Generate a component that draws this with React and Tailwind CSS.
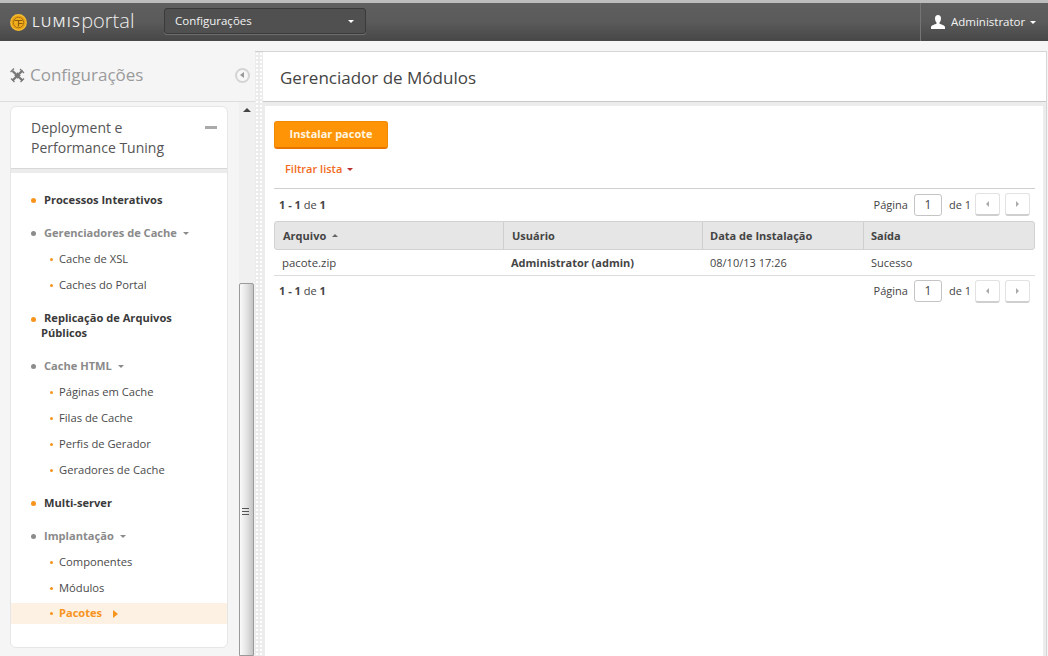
import React from 'react';

const Caret = ({ className = '' }) => (
  <span className={`inline-block w-0 h-0 border-x-[3px] border-x-transparent border-t-[3px] ${className}`}></span>
);

const SubItem = ({ label }) => (
  <div className="flex items-center h-[26px] pl-[39px] text-[11.2px] text-[#4a4a4a]">
    <span className="w-[3px] h-[3px] rounded-full bg-[#f7941d] mr-[6px]"></span>
    {label}
  </div>
);

const MainItem = ({ label }) => (
  <div className="flex items-center h-[26px] pl-[20px] text-[11.1px] font-bold text-[#3a3a3a]">
    <span className="w-[5px] h-[5px] rounded-full bg-[#f7941d] mr-[8px]"></span>
    {label}
  </div>
);

const GroupItem = ({ label }) => (
  <div className="flex items-center h-[26px] pl-[20px] text-[11.1px] font-bold text-[#8a8a8a]">
    <span className="w-[5px] h-[5px] rounded-full bg-[#8c8c8c] mr-[8px]"></span>
    {label}
    <Caret className="ml-[6px] border-t-[#8a8a8a]" />
  </div>
);

const Pager = () => (
  <div className="flex items-center text-[11px] text-[#444]">
    <span>Página</span>
    <span className="w-[28px] h-[22px] ml-[6px] mr-[7px] flex items-center justify-center border border-[#c4c4c4] rounded-[3px] bg-white text-[12px]">1</span>
    <span>de 1</span>
    <span className="w-[25px] h-[23px] ml-[4px] flex items-center justify-center border border-[#e2e2e2] border-b-2 border-b-[#cfcfcf] rounded-[3px] bg-white">
      <span className="w-0 h-0 border-y-[3px] border-y-transparent border-r-[3px] border-r-[#aaa]"></span>
    </span>
    <span className="w-[25px] h-[23px] ml-[5px] flex items-center justify-center border border-[#e2e2e2] border-b-2 border-b-[#cfcfcf] rounded-[3px] bg-white">
      <span className="w-0 h-0 border-y-[3px] border-y-transparent border-l-[3px] border-l-[#aaa]"></span>
    </span>
  </div>
);

const Summary = () => (
  <span className="text-[11px] text-[#444]"><b>1 - 1</b> de <b>1</b></span>
);

const App = () => {
  return (
    <div className="w-[1048px] h-[656px] overflow-hidden flex flex-col bg-[#f5f5f5] font-['Open_Sans',sans-serif]">
      {/* Top bar */}
      <div className="h-[41px] shrink-0 flex items-stretch border-t-[3px] border-t-[#bdbdbd] bg-gradient-to-b from-[#5f5f5f] via-[#5a5a5a] to-[#474747]">
        <div className="w-[164px] flex items-center pl-[10px]">
          <svg width="17" height="17" viewBox="0 0 17 17" className="shrink-0">
            <circle cx="8.5" cy="8.5" r="7.7" fill="#e8a015" stroke="#f4bb2f" strokeWidth="1.4" />
            <circle cx="8.5" cy="8.5" r="5.2" fill="#f0ad1e" stroke="#a8730f" strokeWidth="1" />
            <path d="M4.500 6.500h8M8.500 6.500v6M8.500 9.500h4" stroke="#8a5c0c" strokeWidth="1.2" fill="none" />
          </svg>
          <span className="ml-[5px] text-[14.500px] tracking-[1.200px] text-[#eee] leading-none">LUMIS</span>
          <span className="text-[20px] text-[#eee] leading-none font-light -mt-[3px]">portal</span>
        </div>
        <div className="self-start mt-[5px] w-[202px] h-[26px] flex items-center justify-between pl-[10px] pr-[11px] rounded-[3px] border border-[#3a3a3a] bg-[#505050] shadow-[0_1px_0_#6e6e6e] text-[11.500px] text-[#f2f2f2]">
          Configurações
          <Caret className="border-t-white" />
        </div>
        <div className="ml-auto w-[128px] flex items-center pl-[10px] border-l border-l-[#757575] text-[11.500px] text-[#f2f2f2]">
          <svg width="14" height="14" viewBox="0 0 14 14" className="mr-[6px] shrink-0">
            <path d="M7 0C5 0 4 1.500 4 3.500c0 1.500.5 3 1.500 4v1.200C4 9.500.5 10 0 12v2h14v-2c-.5-2-4-2.500-5.500-3.300V7.500C9.500 6.500 10 5 10 3.500 10 1.500 9 0 7 0Z" fill="#fff" />
          </svg>
          Administrator
          <Caret className="ml-[5px] border-t-white" />
        </div>
      </div>

      <div className="flex-1 flex min-h-0">
        {/* Sidebar */}
        <div className="w-[255px] shrink-0 flex flex-col">
          <div className="h-[61px] shrink-0 flex items-center justify-between pl-[10px] pr-[5px] border-b border-b-[#dedede]">
            <div className="flex items-center mt-[8px]">
              <svg width="15" height="15" viewBox="0 0 15 15" className="mr-[5px]">
                <path d="M2.500 3 12.500 12.500M12.500 2.500 2.500 12.500" stroke="#777" strokeWidth="2.400" fill="none" />
                <path d="M0.500 4 4 .5M10 1l4 4M1 10.500l3.500 3.500M10.500 14l3.500-3.500M7.500 4.500v6M4.500 7.500h6" stroke="#777" strokeWidth="1.200" fill="none" />
              </svg>
              <span className="text-[17px] text-[#9b9b9b]">Configurações</span>
            </div>
            <span className="mt-[8px] w-[15px] h-[15px] rounded-full border-2 border-[#d4d4d4] bg-[#f7f7f7] flex items-center justify-center">
              <span className="w-0 h-0 -ml-[1px] border-y-[3px] border-y-transparent border-r-[4px] border-r-[#999]"></span>
            </span>
          </div>
          <div className="flex-1 flex min-h-0">
            <div className="w-[239px] pl-[10px] pr-[11px] pt-[4px]">
              <div className="h-[542px] bg-white rounded-[6px] border border-[#e6e6e6] overflow-hidden">
                <div className="h-[62px] flex justify-between pl-[20px] pr-[10px] pt-[11px] border-b border-b-[#d8d8d8] text-[14px] leading-[20px] text-[#555]">
                  <div>Deployment e<br />Performance Tuning</div>
                  <span className="w-[12px] h-[3px] bg-[#aaa] mt-[8px]"></span>
                </div>
                <div className="h-[4px] bg-[#ececec]"></div>
                <div className="pt-[14px]">
                  <MainItem label="Processos Interativos" />
                  <div className="h-[7px]"></div>
                  <GroupItem label="Gerenciadores de Cache" />
                  <SubItem label="Cache de XSL" />
                  <SubItem label="Caches do Portal" />
                  <div className="h-[9px]"></div>
                  <div className="pl-[20px] pr-[10px] text-[11.100px] font-bold text-[#3a3a3a] leading-[15px] py-[3px]">
                    <span className="inline-block w-[5px] h-[5px] rounded-full bg-[#f7941d] mr-[8px] align-middle"></span>
                    Replicação de Arquivos<br /><span className="ml-[10px]">Públicos</span>
                  </div>
                  <div className="h-[10px]"></div>
                  <GroupItem label="Cache HTML" />
                  <SubItem label="Páginas em Cache" />
                  <SubItem label="Filas de Cache" />
                  <SubItem label="Perfis de Gerador" />
                  <SubItem label="Geradores de Cache" />
                  <div className="h-[7px]"></div>
                  <MainItem label="Multi-server" />
                  <div className="h-[7px]"></div>
                  <GroupItem label="Implantação" />
                  <SubItem label="Componentes" />
                  <SubItem label="Módulos" />
                  <div className="flex items-center h-[21px] mt-[2px] pl-[39px] bg-[#fdf1e3] text-[11.100px] font-bold text-[#f7941d]">
                    <span className="w-[3px] h-[3px] rounded-full bg-[#f7941d] mr-[6px]"></span>
                    Pacotes
                    <span className="ml-[11px] w-0 h-0 border-y-[4px] border-y-transparent border-l-[5px] border-l-[#f7941d]"></span>
                  </div>
                </div>
              </div>
            </div>
            {/* Scrollbar */}
            <div className="w-[16px] relative bg-[#f0f0f0]">
              <span className="absolute top-[6px] left-[4px] w-0 h-0 border-x-[4px] border-x-transparent border-b-[4px] border-b-[#444]"></span>
              <div className="absolute top-[181px] bottom-0 left-0 w-[15px] rounded-t-[2px] border border-[#9a9a9a] bg-gradient-to-r from-[#fafafa] via-[#e4e4e4] to-[#c4c4c4]"></div>
              <div className="absolute top-[406px] left-[3px] w-[7px] h-[7px] border-y border-[#555] flex items-center">
                <div className="w-full h-px bg-[#555]"></div>
              </div>
            </div>
          </div>
        </div>

        {/* Main */}
        <div className="flex-1 min-w-0 flex pt-[10px] pr-[1px]">
          <div className="w-[8px] shrink-0 border-t border-t-[#d0d0d0] bg-[#ececec] bg-[radial-gradient(#ffffff_1px,transparent_1px)] bg-[length:4px_4px]"></div>
          <div className="flex-1 min-w-0 flex flex-col border-t border-r border-[#d6d6d6] bg-white">
            <div className="h-[50px] shrink-0 flex items-center pl-[17px] pt-[2px] border-b border-b-[#c8c8c8] text-[17px] text-[#444]">
              Gerenciador de Módulos
            </div>
            <div className="flex-1 pt-[4px] pl-[2px] pr-[3px] bg-[#ececec]">
              <div className="h-full bg-white pl-[9px] pr-[8px] pt-[14px]">
                <button className="w-[114px] h-[28px] rounded-[3px] bg-[#ff9406] border border-[#f08a00] border-b-2 border-b-[#e87500] text-[11px] font-bold text-[#fff5e0]">Instalar pacote</button>
                <div className="flex items-center h-[39px] pl-[11px] pt-[2px] text-[11px] font-semibold text-[#f26a21]">
                  Filtrar lista
                  <Caret className="ml-[5px] border-t-[#b9302f]" />
                </div>
                <div className="flex items-center justify-between h-[33px] border-t border-t-[#cfcfcf] pl-[5px] pr-[5px]">
                  <Summary />
                  <Pager />
                </div>
                <div className="grid grid-cols-[228px_199px_161px_1fr] h-[29px] items-center bg-[#e6e6e6] border border-[#d2d2d2] rounded-[3px] text-[11px] font-bold text-[#444]">
                  <div className="pl-[8px] pt-[1px] h-full flex items-center">Arquivo<span className="ml-[6px] w-0 h-0 border-x-[3px] border-x-transparent border-b-[3px] border-b-[#666]"></span></div>
                  <div className="pl-[8px] pt-[1px] h-full flex items-center border-l border-l-[#cfcfcf]">Usuário</div>
                  <div className="pl-[7px] pt-[1px] h-full flex items-center border-l border-l-[#cfcfcf]">Data de Instalação</div>
                  <div className="pl-[7px] pt-[1px] h-full flex items-center border-l border-l-[#cfcfcf]">Saída</div>
                </div>
                <div className="grid grid-cols-[229px_199px_161px_1fr] h-[26px] pt-[1px] items-center border-b border-b-[#dcdcdc] text-[11px] text-[#444]">
                  <div className="pl-[8px] text-[11.400px]">pacote.zip</div>
                  <div className="pl-[8px] font-bold">Administrator (admin)</div>
                  <div className="pl-[8px]">08/10/13 17:26</div>
                  <div className="pl-[8px]">Sucesso</div>
                </div>
                <div className="flex items-center justify-between h-[31px] pl-[5px] pr-[5px]">
                  <Summary />
                  <Pager />
                </div>
              </div>
            </div>
          </div>
        </div>
      </div>
    </div>
  );
};

export default App;
